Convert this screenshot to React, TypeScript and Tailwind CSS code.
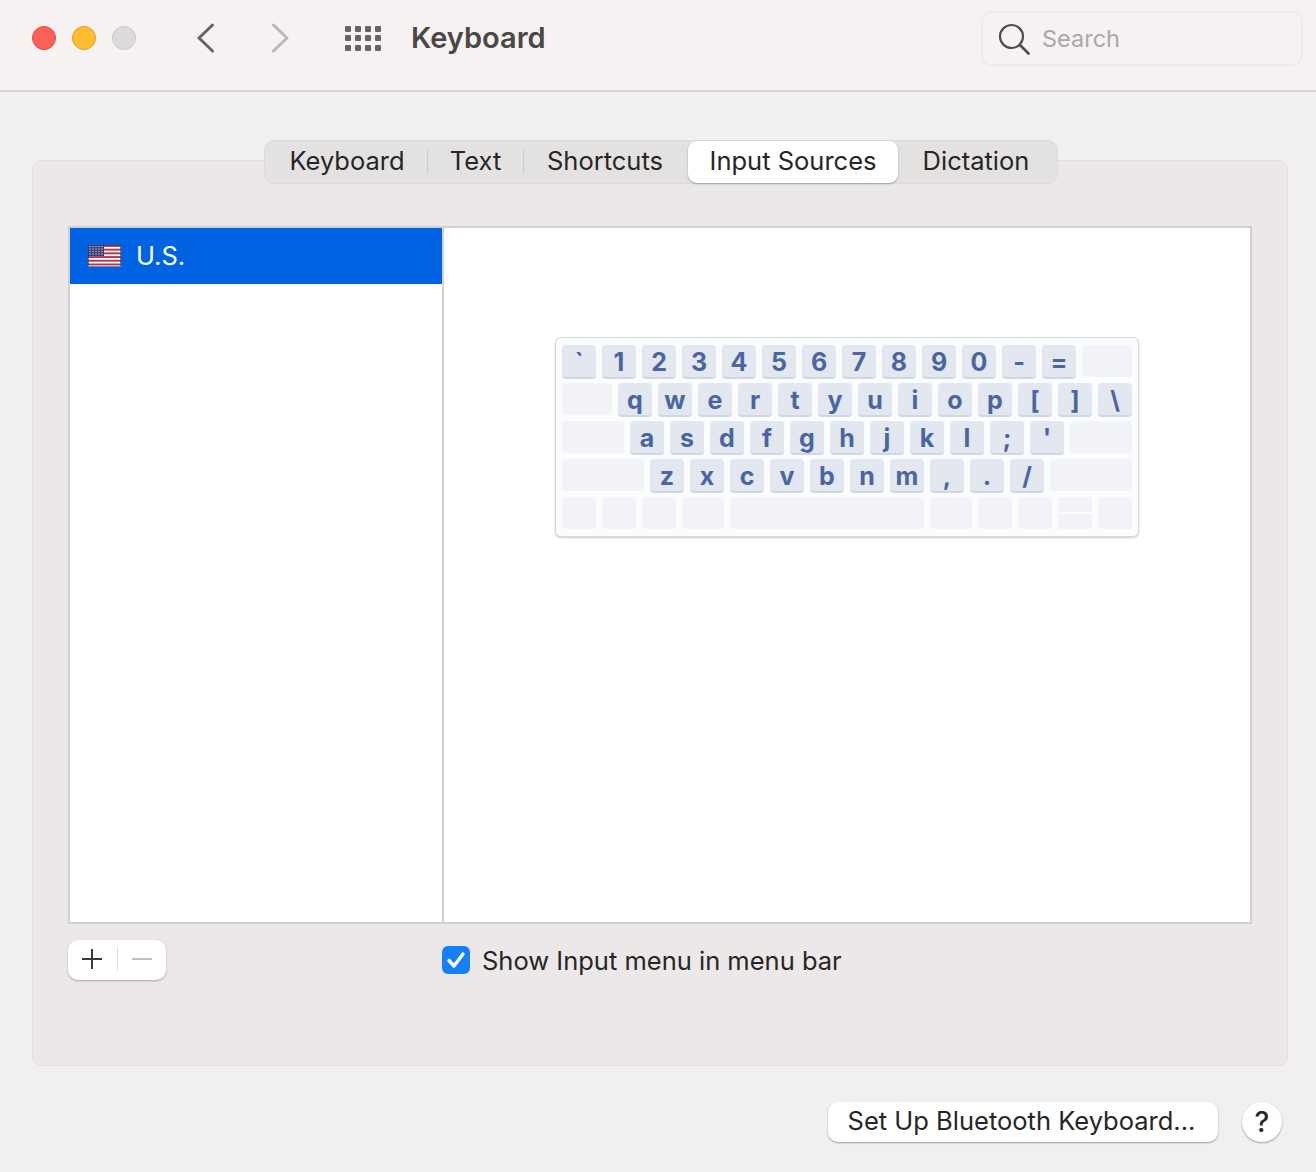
import React from "react";

const font = { fontFamily: "Inter, 'Liberation Sans', sans-serif" };

function Key({ label, w = "w-[34px]" }: { label: string; w?: string }) {
  return (
    <div className={`${w} h-[32px] shrink-0 rounded-[4px] bg-[#e2e7f0] shadow-[0_2px_0_#d0d6e4] flex items-center justify-center pt-[2px] text-[25px] leading-none font-bold text-[#4a66a2]`}>
      {label}
    </div>
  );
}

function Blank({ w }: { w: string }) {
  return <div className={`${w} h-[32px] shrink-0 rounded-[4px] bg-[#f1f3f7]`} />;
}

function Row({ children }: { children: React.ReactNode }) {
  return <div className="flex gap-[6px]">{children}</div>;
}

function Keys({ chars }: { chars: string }) {
  return (
    <>
      {chars.split("").map((c, i) => (
        <Key key={i} label={c} />
      ))}
    </>
  );
}

function Flag() {
  return (
    <svg width="33" height="22" viewBox="0 0 33 22" className="shrink-0">
      <rect width="33" height="22" fill="#ffffff" />
      {[0, 1, 2, 3, 4, 5].map((i) => (
        <rect key={i} x="0" y={i * 3.7} width="33" height="1.9" fill="#b5364a" />
      ))}
      <rect x="0" y="0" width="16" height="11" fill="#3c3b6e" />
      {[1.5, 4, 6.5, 9].map((y) =>
        [2, 5, 8, 11, 14].map((x) => <circle key={`${x}-${y}`} cx={x} cy={y} r="0.7" fill="#d8d8ec" />)
      )}
      <rect x="0.5" y="0.5" width="32" height="21" fill="none" stroke="#3c2f60" strokeOpacity="0.6" />
    </svg>
  );
}

const tabBase = "h-full flex items-center justify-center pb-[2px] text-[25.5px] leading-none text-[#262626]";

export default function App() {
  return (
    <div className="w-[1316px] h-[1172px] bg-[#f2f0ef] overflow-hidden flex flex-col" style={font}>
      {/* toolbar */}
      <div className="h-[92px] shrink-0 bg-[#f6f2f2] border-b-2 border-[#d6d3d3] flex items-center pb-[14px]">
        <div className="ml-[32px] flex gap-[16px]">
          <div className="w-[24px] h-[24px] rounded-full bg-[#fe5f57] border border-[#e2463f]" />
          <div className="w-[24px] h-[24px] rounded-full bg-[#febc2e] border border-[#dfa023]" />
          <div className="w-[24px] h-[24px] rounded-full bg-[#dcdbda] border border-[#c8c6c6]" />
        </div>
        <svg width="20" height="30" viewBox="0 0 20 30" className="ml-[60px] -mt-[1px]">
          <path d="M16.5 2 L3 15 L16.5 28" fill="none" stroke="#666464" strokeWidth="3" strokeLinecap="round" strokeLinejoin="round" />
        </svg>
        <svg width="20" height="30" viewBox="0 0 20 30" className="ml-[54px] -mt-[1px]">
          <path d="M3.5 2 L17 15 L3.5 28" fill="none" stroke="#b9b7b7" strokeWidth="3" strokeLinecap="round" strokeLinejoin="round" />
        </svg>
        <div className="ml-[55px] grid grid-cols-4 gap-x-[4px] gap-y-[3.5px] w-[36px]">
          {Array.from({ length: 12 }).map((_, i) => (
            <div key={i} className="w-[6px] h-[6px] rounded-[1px] bg-[#666464]" />
          ))}
        </div>
        <div className="ml-[30px] pb-[2px] text-[29px] leading-none font-semibold text-[#4a4747]">Keyboard</div>
        <div className="ml-auto mr-[13px] mt-[1px] w-[322px] h-[55px] rounded-[10px] border-2 border-[#eeeaea] flex items-center pl-[16px]">
          <svg width="32" height="32" viewBox="0 0 32 32" className="shrink-0 -ml-[1px]">
            <circle cx="13.5" cy="13.5" r="11.5" fill="none" stroke="#4f4d4d" strokeWidth="2.2" />
            <path d="M22 22 L30.5 30.5" stroke="#4f4d4d" strokeWidth="2.6" strokeLinecap="round" />
          </svg>
          <span className="ml-[12px] text-[23.5px] leading-none text-[#aaa7a7]">Search</span>
        </div>
      </div>

      {/* panel */}
      <div className="mt-[68px] ml-[32px] w-[1256px] h-[906px] rounded-[10px] bg-[#ebe8e7] border border-[#e2dfde] flex flex-col">
        <div className="-mt-[21px] self-center relative left-[1px] w-[794px] h-[44px] rounded-[11px] bg-[#e4e2e1] border border-[#dcdad9] flex items-center">
          <div className={`${tabBase} w-[162px] pl-[2px]`}>Keyboard</div>
          <div className="w-px h-[24px] bg-[#cfcdcc]" />
          <div className={`${tabBase} w-[95px]`}>Text</div>
          <div className="w-px h-[24px] bg-[#cfcdcc]" />
          <div className={`${tabBase} w-[164px] pr-[2px]`}>Shortcuts</div>
          <div className={`${tabBase} w-[210px] bg-white rounded-[9px] shadow-[0_1px_2px_rgba(0,0,0,0.3)]`}>Input Sources</div>
          <div className={`${tabBase} w-[158px] pr-[2px]`}>Dictation</div>
        </div>

        {/* list */}
        <div className="mt-[42px] mx-[35px] h-[698px] border-2 border-[#d2d0cf] bg-white flex">
          <div className="w-[372px] shrink-0">
            <div className="h-[56px] bg-[#0063e1] flex items-center pl-[18px] gap-[15px]">
              <Flag />
              <span className="text-[25.5px] leading-none text-white">U.S.</span>
            </div>
          </div>
          <div className="w-[2px] shrink-0 bg-[#d2d0cf]" />
          <div className="flex-1 pt-[109px] pl-[111px]">
            <div className="w-[584px] h-[200px] rounded-[6px] bg-[#fbfcfe] border border-[#d8d9dc] shadow-[0_1px_2px_rgba(0,0,0,0.2)] pl-[6px] pt-[7px] flex flex-col gap-[6px]">
              <Row>
                <Keys chars={"`1234567890-="} />
                <Blank w="w-[50px]" />
              </Row>
              <Row>
                <Blank w="w-[50px]" />
                <Keys chars={"qwertyuiop[]\\"} />
              </Row>
              <Row>
                <Blank w="w-[62px]" />
                <Keys chars={"asdfghjkl;'"} />
                <Blank w="w-[62px]" />
              </Row>
              <Row>
                <Blank w="w-[82px]" />
                <Keys chars={"zxcvbnm,./"} />
                <Blank w="w-[82px]" />
              </Row>
              <Row>
                <Blank w="w-[34px]" />
                <Blank w="w-[34px]" />
                <Blank w="w-[34px]" />
                <Blank w="w-[42px]" />
                <Blank w="w-[194px]" />
                <Blank w="w-[42px]" />
                <Blank w="w-[34px]" />
                <Blank w="w-[34px]" />
                <div className="w-[34px] h-[32px] flex flex-col gap-[2px]">
                  <div className="h-[15px] rounded-[2px] bg-[#f1f3f7]" />
                  <div className="h-[15px] rounded-[2px] bg-[#f1f3f7]" />
                </div>
                <Blank w="w-[34px]" />
              </Row>
            </div>
          </div>
        </div>

        {/* below list */}
        <div className="mt-[16px] ml-[35px] flex items-center">
          <div className="w-[98px] h-[40px] rounded-[10px] bg-white shadow-[0_1px_2px_rgba(0,0,0,0.3)] flex items-center pb-[2px]">
            <svg width="22" height="22" viewBox="0 0 22 22" className="ml-[13px]">
              <path d="M11 1 V21 M1 11 H21" stroke="#3a3a3a" strokeWidth="2" />
            </svg>
            <div className="ml-[14px] w-[1px] h-[24px] bg-[#e0dfdf]" />
            <svg width="22" height="22" viewBox="0 0 22 22" className="ml-[13px]">
              <path d="M1 11 H21" stroke="#c2c1c1" strokeWidth="2" />
            </svg>
          </div>
          <div className="ml-[276px] w-[28px] h-[28px] rounded-[6px] bg-[#157efb] flex items-center justify-center">
            <svg width="20" height="20" viewBox="0 0 20 20">
              <path d="M3 10.5 L8 16 L17 4" fill="none" stroke="#ffffff" strokeWidth="3.4" strokeLinecap="round" strokeLinejoin="round" />
            </svg>
          </div>
          <span className="ml-[12px] pt-[2px] text-[25.5px] leading-none text-[#262626]">Show Input menu in menu bar</span>
        </div>
      </div>

      {/* footer */}
      <div className="mt-[36px] flex">
        <div className="ml-[828px] w-[390px] h-[40px] rounded-[10px] bg-white shadow-[0_1px_2px_rgba(0,0,0,0.35)] flex items-center justify-center pb-[2px] pr-[3px] text-[25.5px] leading-none text-[#262626]">
          Set Up Bluetooth Keyboard...
        </div>
        <div className="ml-[24px] w-[40px] h-[40px] rounded-full bg-white shadow-[0_1px_2px_rgba(0,0,0,0.35)] flex items-center justify-center text-[28px] leading-none font-medium text-[#262626]">
          ?
        </div>
      </div>
    </div>
  );
}
